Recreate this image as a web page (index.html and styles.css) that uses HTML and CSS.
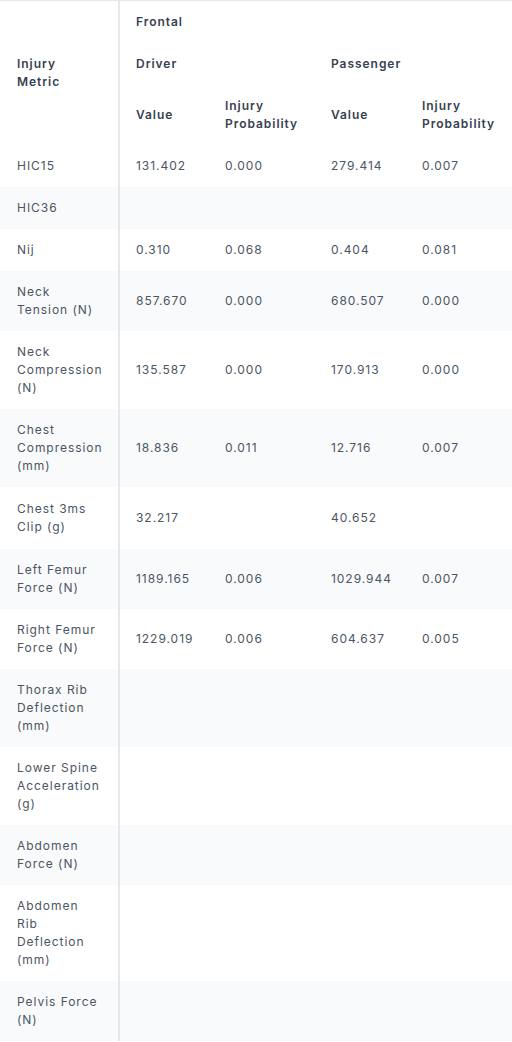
FILE: index.html
```html
<!DOCTYPE html>
<html lang="en">
<head>
<meta charset="utf-8">
<title>Injury Metrics</title>
<link rel="stylesheet" href="styles.css">
</head>
<body>
<table class="metrics">
  <colgroup>
    <col class="c-metric">
    <col class="c-val">
    <col class="c-prob">
    <col class="c-val2">
    <col class="c-prob2">
  </colgroup>
  <thead>
    <tr>
      <th class="metric-head" rowspan="3">Injury Metric</th>
      <th colspan="4">Frontal</th>
    </tr>
    <tr>
      <th colspan="2">Driver</th>
      <th colspan="2">Passenger</th>
    </tr>
    <tr>
      <th>Value</th>
      <th>Injury Probability</th>
      <th>Value</th>
      <th>Injury Probability</th>
    </tr>
  </thead>
  <tbody>
    <tr><td class="metric">HIC15</td><td>131.402</td><td>0.000</td><td>279.414</td><td>0.007</td></tr>
    <tr><td class="metric">HIC36</td><td></td><td></td><td></td><td></td></tr>
    <tr><td class="metric">Nij</td><td>0.310</td><td>0.068</td><td>0.404</td><td>0.081</td></tr>
    <tr><td class="metric">Neck Tension (N)</td><td>857.670</td><td>0.000</td><td>680.507</td><td>0.000</td></tr>
    <tr><td class="metric">Neck Compression (N)</td><td>135.587</td><td>0.000</td><td>170.913</td><td>0.000</td></tr>
    <tr><td class="metric">Chest Compression (mm)</td><td>18.836</td><td>0.011</td><td>12.716</td><td>0.007</td></tr>
    <tr class="row-tall"><td class="metric">Chest 3ms Clip (g)</td><td>32.217</td><td></td><td>40.652</td><td></td></tr>
    <tr><td class="metric">Left Femur Force (N)</td><td>1189.165</td><td>0.006</td><td>1029.944</td><td>0.007</td></tr>
    <tr><td class="metric">Right Femur Force (N)</td><td>1229.019</td><td>0.006</td><td>604.637</td><td>0.005</td></tr>
    <tr><td class="metric">Thorax Rib Deflection (mm)</td><td></td><td></td><td></td><td></td></tr>
    <tr><td class="metric">Lower Spine Acceleration (g)</td><td></td><td></td><td></td><td></td></tr>
    <tr><td class="metric">Abdomen Force (N)</td><td></td><td></td><td></td><td></td></tr>
    <tr><td class="metric">Abdomen Rib Deflection (mm)</td><td></td><td></td><td></td><td></td></tr>
    <tr><td class="metric">Pelvis Force (N)</td><td></td><td></td><td></td><td></td></tr>
  </tbody>
</table>
</body>
</html>
```

FILE: styles.css
```css
html, body {
  margin: 0;
  padding: 0;
  background: #ffffff;
}
body {
  font-family: Inter, "Noto Sans", sans-serif;
  font-size: 12px;
  line-height: 18px;
  letter-spacing: 0.08em;
  color: #4b5563;
}
.metrics {
  width: 512px;
  table-layout: fixed;
  border-collapse: separate;
  border-spacing: 0;
  border-top: 1px solid #e5e7eb;
}
.c-metric { width: 120px; }
.c-val { width: 89px; }
.c-prob { width: 106px; }
.c-val2 { width: 91px; }
.c-prob2 { width: 106px; }
th, td {
  padding: 12px 16px;
  text-align: left;
  vertical-align: middle;
}
th {
  font-weight: 600;
  color: #374151;
}
.metric-head,
.metric {
  border-right: 2px solid #e5e7eb;
  padding-left: 17px;
  padding-right: 19px;
}
.row-tall td {
  padding-top: 13px;
  padding-bottom: 13px;
}
tbody tr:nth-child(even) td {
  background: #f9fafb;
}
```
